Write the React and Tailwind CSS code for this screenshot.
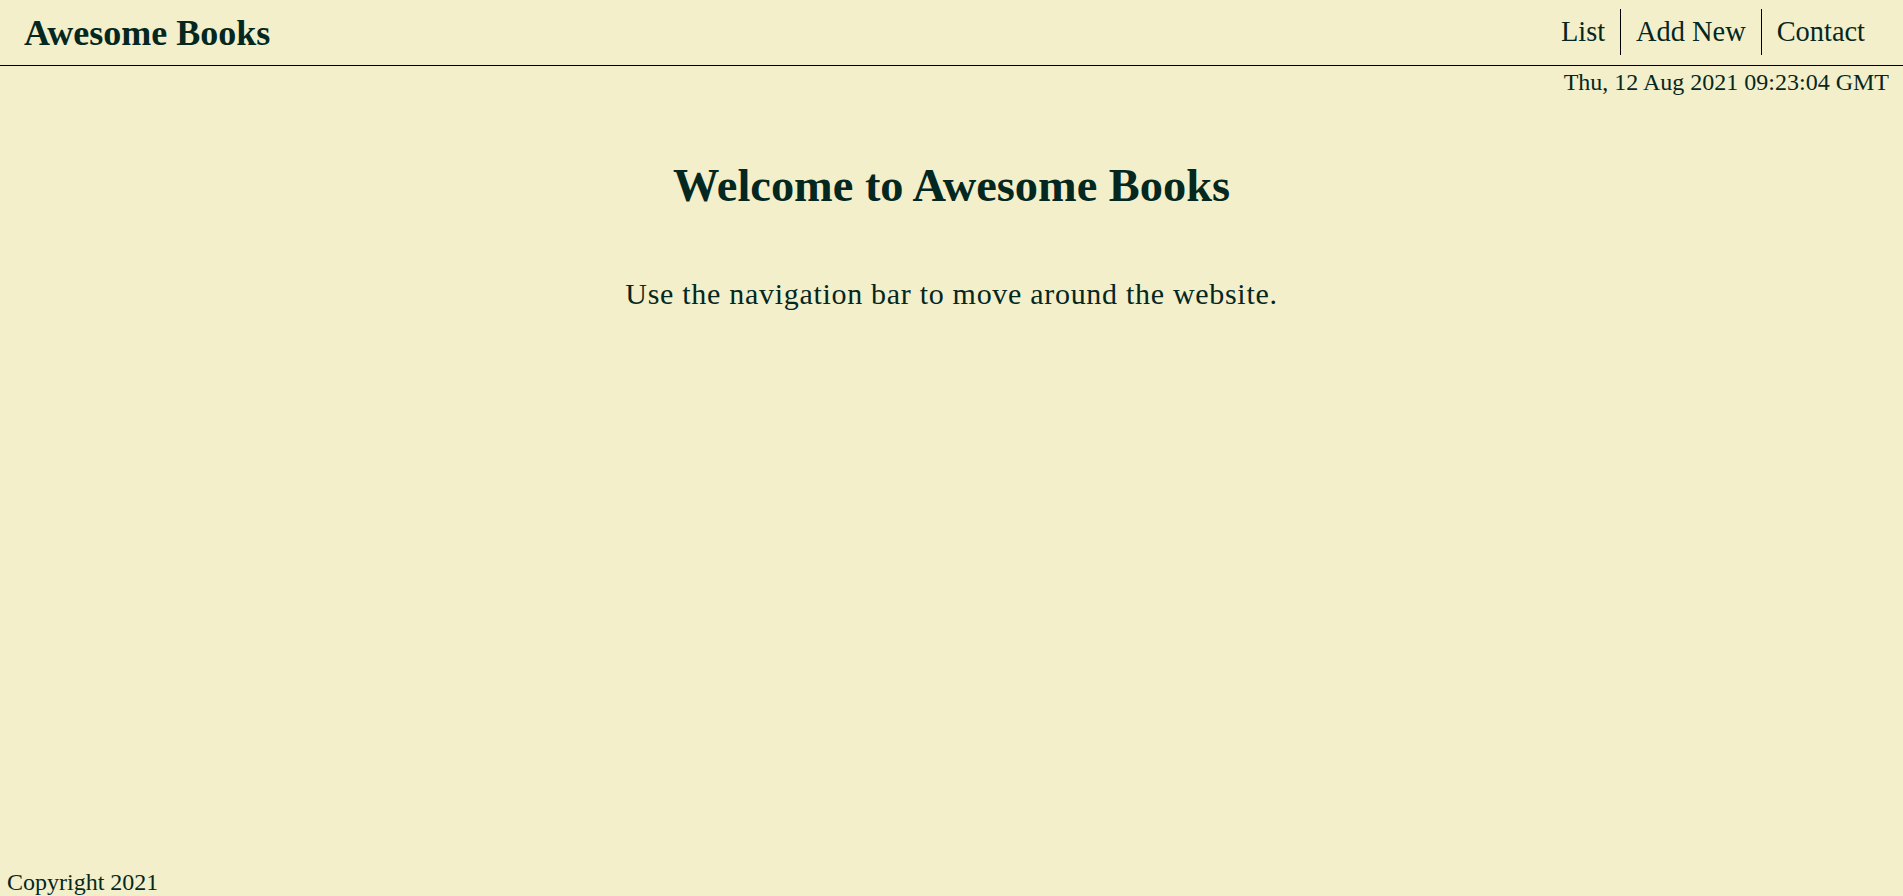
const links = ['List', 'Add New', 'Contact'];

const App = () => {
  return (
    <div className="min-h-screen flex flex-col bg-[#f3efca] text-[#04281f] font-['Liberation_Serif',serif]">
      <header className="h-[66px] border-b border-black flex items-center justify-between pl-6 pr-[23px]">
        <h1 className="text-[36px] font-bold leading-none">Awesome Books</h1>
        <nav className="flex items-center -mt-[2px]">
          {links.map((link, index) => (
            <a
              key={link}
              href="#"
              className={`px-[15px] py-[7px] text-[28.4px] leading-[32px] ${index > 0 ? 'border-l border-black' : ''}`}
            >
              {link}
            </a>
          ))}
        </nav>
      </header>

      <p className="text-right pr-[14px] pt-[2px] text-[24px] leading-[28px]">
        Thu, 12 Aug 2021 09:23:04 GMT
      </p>

      <main className="flex-1 text-center">
        <h2 className="mt-[63px] text-[46.4px] leading-[53px] font-bold">Welcome to Awesome Books</h2>
        <p className="mt-[64px] text-[30px] leading-[35px] tracking-[0.7px]">
          Use the navigation bar to move around the website.
        </p>
      </main>

      <footer className="pl-[7px] text-[24px] leading-[28px]">Copyright 2021</footer>
    </div>
  );
};

export default App;
